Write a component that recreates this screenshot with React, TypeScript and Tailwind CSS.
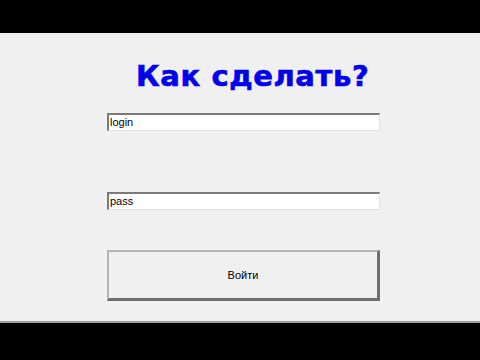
export default function App() {
  return (
    <div className="w-[480px] h-[360px] bg-black flex flex-col overflow-hidden">
      <div className="h-[33px] shrink-0 bg-black" />
      <main className="h-[290px] shrink-0 bg-[#f0f0f0] border-b-2 border-[#a0a0a0] flex flex-col">
        <h1
          className="mt-[26px] ml-[136px] text-[29px] leading-[34px] tracking-[0.6px] font-bold text-[#0000ee] [-webkit-text-stroke:0.6px_#0000ee]"
          style={{ fontFamily: '"DejaVu Sans", Verdana, sans-serif' }}
        >
          Как сделать?
        </h1>
        <div
          className="ml-[107px] w-[273px] flex flex-col text-[11px] text-black"
          style={{ fontFamily: '"Liberation Sans", Arial, sans-serif' }}
        >
          <div className="mt-[20px] h-[18px] bg-white border-t-2 border-l-2 border-[#7a7a7a] border-b border-r border-b-[#e3e3e3] border-r-[#e3e3e3] flex items-center pl-px">
            login
          </div>
          <div className="mt-[61px] h-[18px] bg-white border-t-2 border-l-2 border-[#7a7a7a] border-b border-r border-b-[#e3e3e3] border-r-[#e3e3e3] flex items-center pl-px">
            pass
          </div>
          <button className="mt-[40px] h-[51px] bg-[#f0f0f0] border-t-2 border-l-2 border-t-[#b4b4b4] border-l-[#b4b4b4] border-b-[3px] border-r-[3px] border-b-[#6e6e6e] border-r-[#6e6e6e] text-[11px] text-black">
            Войти
          </button>
        </div>
      </main>
      <div className="flex-1 bg-black" />
    </div>
  );
}
